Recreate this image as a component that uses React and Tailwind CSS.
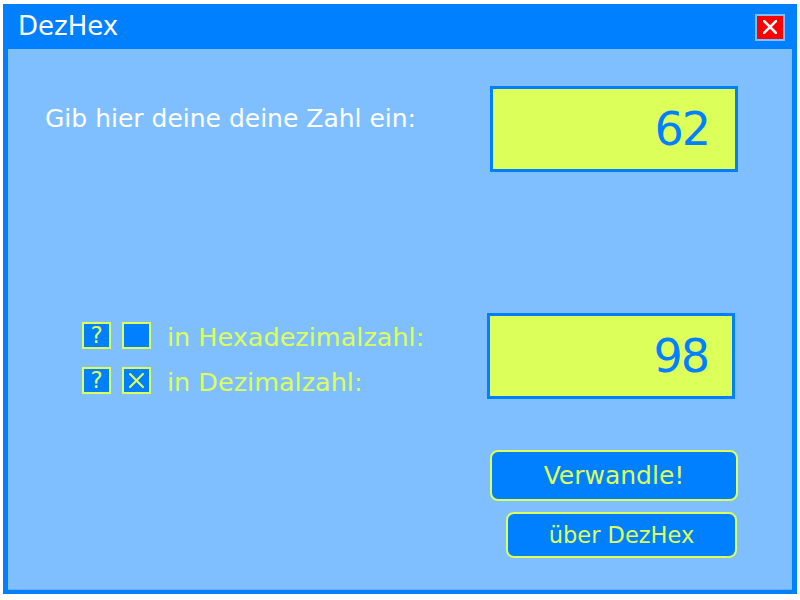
const FONT = { fontFamily: '"Comic Sans MS", "DejaVu Sans", sans-serif' }

function XMark({ color, size = 14, stroke = 2.5 }) {
  return (
    <svg width={size} height={size} viewBox="0 0 14 14">
      <path d="M1 1 L13 13 M13 1 L1 13" stroke={color} strokeWidth={stroke} strokeLinecap="square" fill="none" />
    </svg>
  )
}

function Check({ children }) {
  return (
    <div className="w-[29px] h-[27px] border-2 border-[#dcff5a] bg-[#0080ff] flex items-center justify-center text-[#dcff5a] text-[23px] leading-none">
      {children}
    </div>
  )
}

function OptionRow({ checked, label }) {
  return (
    <div className="flex items-center">
      <Check>?</Check>
      <div className="ml-[11px]">
        <Check>{checked && <XMark color="#dcff5a" size={15} stroke={2} />}</Check>
      </div>
      <span className="ml-[16px] text-[#dcff5a] text-[25.5px] leading-[28px] pt-[2px]">{label}</span>
    </div>
  )
}

export default function App() {
  return (
    <div className="w-[800px] h-[600px] bg-white pt-[4px] pl-[3px]" style={FONT}>
      <div className="w-[794px] h-[590px] bg-[#0080ff] flex flex-col px-[5px] pb-[4px]">
        {/* title bar */}
        <div className="h-[45px] flex items-center justify-between shrink-0">
          <span className="pl-[10px] text-white text-[26px] leading-none pb-[1px]">DezHex</span>
          <button className="mr-[7px] mt-[1px] w-[30px] h-[27px] border-2 border-[#80bfff] bg-[#ff0000] flex items-center justify-center">
            <XMark color="#ffffff" size={14} stroke={2.5} />
          </button>
        </div>

        {/* content */}
        <div className="flex-1 bg-[#80bfff] flex flex-col border-b border-[#6aaef0]">
          <div className="mt-[37px] flex items-start">
            <span className="ml-[37px] mt-[18px] text-white text-[25px] leading-[30px]">Gib hier deine deine Zahl ein:</span>
            <div className="ml-auto mr-[54px] w-[248px] h-[86px] border-[3px] border-[#0080ff] bg-[#dcff5a] flex items-center justify-end pr-[26px] text-[#0080ff] text-[46px] leading-none tracking-[-2px]">
              62
            </div>
          </div>

          <div className="mt-[141px] flex items-center">
            <div className="ml-[74px] mt-[4px] flex flex-col gap-[15px]">
              <OptionRow checked={false} label="in Hexadezimalzahl:" />
              <OptionRow checked={true} label="in Dezimalzahl:" />
            </div>
            <div className="ml-auto mr-[57px] w-[248px] h-[86px] border-[3px] border-[#0080ff] bg-[#dcff5a] flex items-center justify-end pr-[24px] text-[#0080ff] text-[46px] leading-none tracking-[-2px]">
              98
            </div>
          </div>

          <div className="mt-[51px] self-end mr-[54px] flex flex-col items-end">
            <button className="w-[248px] h-[51px] rounded-[8px] border-2 border-[#dcff5a] bg-[#0080ff] text-[#dcff5a] text-[25px] leading-none">
              Verwandle!
            </button>
            <button className="mt-[11px] mr-[1px] w-[231px] h-[46px] rounded-[8px] border-2 border-[#dcff5a] bg-[#0080ff] text-[#dcff5a] text-[22.5px] leading-none">
              über DezHex
            </button>
          </div>
        </div>
      </div>
    </div>
  )
}
